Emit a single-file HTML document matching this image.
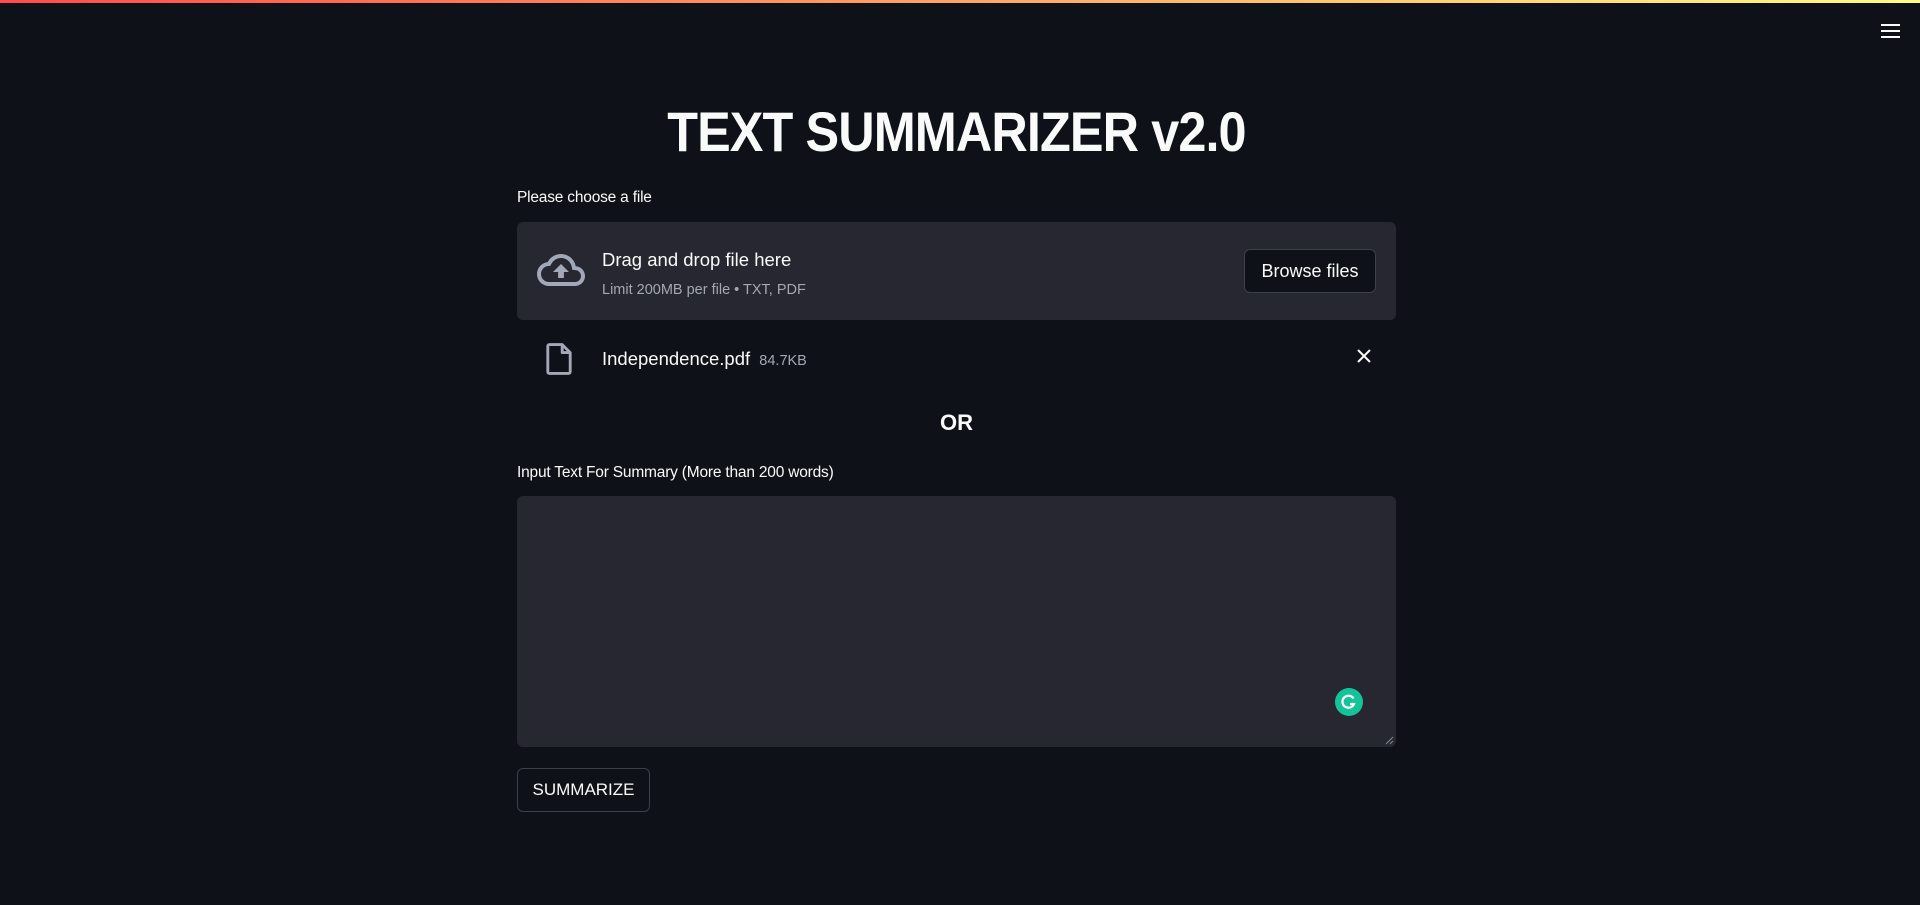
<!DOCTYPE html>
<html><head><meta charset="utf-8"><style>
*{box-sizing:border-box;margin:0;padding:0}
body{width:1920px;height:905px;background:#0e1117;font-family:"Liberation Sans",sans-serif;color:#fafafa;position:relative;overflow:hidden}
.bar{position:absolute;left:0;top:0;width:1920px;height:3px;background:linear-gradient(90deg,#ff4b4b,#fffd80)}
.abs{position:absolute}
h1{position:absolute;left:0;width:1913px;top:99px;text-align:center;font-size:56px;font-weight:700;letter-spacing:-1px;transform:scaleX(.9);transform-origin:956px 0}
.lbl{font-size:15.5px;letter-spacing:-.2px}
.drop{left:517px;top:222px;width:879px;height:98px;background:#262730;border-radius:6px}
.btn{border:1px solid #3d3f4a;border-radius:6px;background:#0e1117;font-size:18px;display:flex;align-items:center;justify-content:center}
.ta{left:517px;top:496px;width:879px;height:251px;background:#262730;border-radius:6px}
</style></head><body>
<div class="bar"></div>
<svg class="abs" style="left:1881px;top:24px" width="19" height="15" viewBox="0 0 19 15"><rect y="0" width="19" height="2" fill="#fafafa"/><rect y="6" width="19" height="2" fill="#fafafa"/><rect y="12" width="19" height="2" fill="#fafafa"/></svg>
<h1>TEXT SUMMARIZER v2.0</h1>
<div class="abs lbl" style="left:517px;top:189px">Please choose a file</div>
<div class="abs drop"></div>
<svg class="abs" style="left:537px;top:250px" width="48" height="40" viewBox="0 0 24 20"><path d="M19.35 8.04A7.49 7.49 0 0 0 12 2C9.11 2 6.6 3.64 5.35 6.04A5.99 5.99 0 0 0 0 12c0 3.310 2.69 6 6 6h13c2.76 0 5-2.24 5-5 0-2.640-2.05-4.78-4.65-4.96zM19 16H6c-2.21 0-4-1.79-4-4 0-2.05 1.53-3.76 3.56-3.97l1.07-.11.5-.95A5.47 5.47 0 0 1 12 4c2.62 0 4.88 1.86 5.39 4.43l.3 1.5 1.53.11A2.98 2.98 0 0 1 22 13c0 1.650-1.35 3-3 3zM8 11h2.55v3h2.9v-3H16l-4-4z" fill="#a3a8b8"/></svg>
<div class="abs" style="left:602px;top:249px;font-size:18.5px">Drag and drop file here</div>
<div class="abs" style="left:602px;top:282px;font-size:14.5px;color:#a3a8b4">Limit 200MB per file • TXT, PDF</div>
<div class="abs btn" style="left:1244px;top:249px;width:132px;height:44px">Browse files</div>
<svg class="abs" style="left:545px;top:343px" width="28" height="32" viewBox="0 0 16 20"><path d="M2 1h8l5 5v12a1 1 0 0 1-1 1H2a1 1 0 0 1-1-1V2a1 1 0 0 1 1-1zM10 1v5h5" fill="none" stroke="#a3a8b8" stroke-width="1.8" stroke-linejoin="round"/></svg>
<div class="abs" style="left:602px;top:348px;font-size:18.5px">Independence.pdf <span style="font-size:14.5px;color:#a3a8b4;margin-left:4px">84.7KB</span></div>
<svg class="abs" style="left:1357px;top:349px" width="14" height="14" viewBox="0 0 14 14"><path d="M1 1L13 13M13 1L1 13" stroke="#fafafa" stroke-width="2"/></svg>
<div class="abs" style="left:0;width:1913px;top:410px;text-align:center;font-size:22px;font-weight:700">OR</div>
<div class="abs lbl" style="left:517px;top:464px">Input Text For Summary (More than 200 words)</div>
<div class="abs ta"></div>
<div class="abs" style="left:1335px;top:688px;width:28px;height:28px;border-radius:50%;background:#15c39a"></div>
<svg class="abs" style="left:1335px;top:688px" width="28" height="28" viewBox="0 0 28 28"><path d="M18.5 10.5A6 6 0 1 0 19 16h-4" fill="none" stroke="#fff" stroke-width="2.2"/></svg>
<svg class="abs" style="left:1384px;top:735px" width="10" height="10"><path d="M9 2L2 9M9 6L6 9" stroke="#888" stroke-width="1"/></svg>
<div class="abs btn" style="left:517px;top:768px;width:133px;height:44px;font-size:17px">SUMMARIZE</div>
</body></html>
